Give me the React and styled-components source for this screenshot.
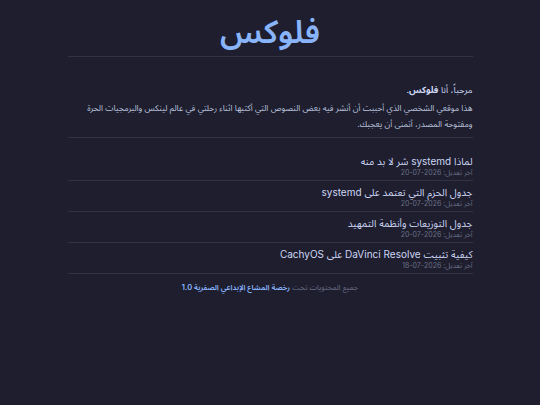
import React from "react";
import styled, { createGlobalStyle } from "styled-components";

const GlobalStyle = createGlobalStyle`
  html, body {
    margin: 0;
    padding: 0;
    background: #1e1e2e;
  }
  body {
    font-family: Inter, "Noto Sans Arabic", "DejaVu Sans", sans-serif;
    color: #cdd6f4;
  }
`;

const Page = styled.div`
  direction: rtl;
  width: 405px;
  margin: 0 auto;
  min-height: 405px;
`;

const Header = styled.header`
  display: flex;
  justify-content: center;
  height: 56px;
  border-bottom: 1px solid #313244;
`;

const SiteTitle = styled.h1`
  margin: 0;
  padding-top: 10px;
  font-size: 32px;
  font-weight: 600;
  line-height: 44px;
  color: #89b4fa;
`;

const Intro = styled.section`
  padding: 26px 0 5px;
  border-bottom: 1px solid #313244;
`;

const Greeting = styled.p`
  margin: 0 0 3px;
  font-size: 9px;
  line-height: 14px;
  color: #cdd6f4;

  strong {
    font-weight: 700;
  }
`;

const About = styled.p`
  margin: 0;
  font-size: 8.3px;
  line-height: 16px;
  color: #bac2de;
`;

const PostList = styled.ul`
  list-style: none;
  margin: 0;
  padding: 12px 0 0;
`;

const PostItem = styled.li`
  padding: 5px 0 3px;
  border-bottom: 1px solid #313244;
`;

const PostTitle = styled.a`
  display: block;
  font-size: 10px;
  line-height: 13px;
  color: #cdd6f4;
  text-decoration: none;
`;

const PostDate = styled.div`
  margin-top: 1px;
  font-size: 7px;
  line-height: 8px;
  color: #6c7086;
`;

const Footer = styled.footer`
  padding-top: 8px;
  text-align: center;
  font-size: 7.5px;
  line-height: 12px;
  color: #6c7086;

  a {
    color: #89b4fa;
    font-weight: 600;
    text-decoration: none;
  }
`;

const posts = [
  { title: "لماذا systemd شر لا بد منه", date: "2026-07-20" },
  { title: "جدول الحزم التي تعتمد على systemd", date: "2026-07-20" },
  { title: "جدول التوزيعات وأنظمة التمهيد", date: "2026-07-20" },
  { title: "كيفية تثبيت DaVinci Resolve على CachyOS", date: "2026-07-18" },
];

export default function App() {
  return (
    <>
      <GlobalStyle />
      <Page>
        <Header>
          <SiteTitle>فلوكس</SiteTitle>
        </Header>
        <Intro>
          <Greeting>
            مرحباً، أنا <strong>فلوكس</strong>.
          </Greeting>
          <About>
            هذا موقعي الشخصي الذي أحببت أن أنشر فيه بعض النصوص التي أكتبها اثناء
            رحلتي في عالم لينكس والبرمجيات الحرة ومفتوحة المصدر، أتمنى أن يعجبك.
          </About>
        </Intro>
        <PostList>
          {posts.map((p) => (
            <PostItem key={p.title}>
              <PostTitle href="#">{p.title}</PostTitle>
              <PostDate>آخر تعديل: {p.date}</PostDate>
            </PostItem>
          ))}
        </PostList>
        <Footer>
          جميع المحتويات تحت <a href="#">رخصة المشاع الإبداعي الصفرية 1.0</a>
        </Footer>
      </Page>
    </>
  );
}
